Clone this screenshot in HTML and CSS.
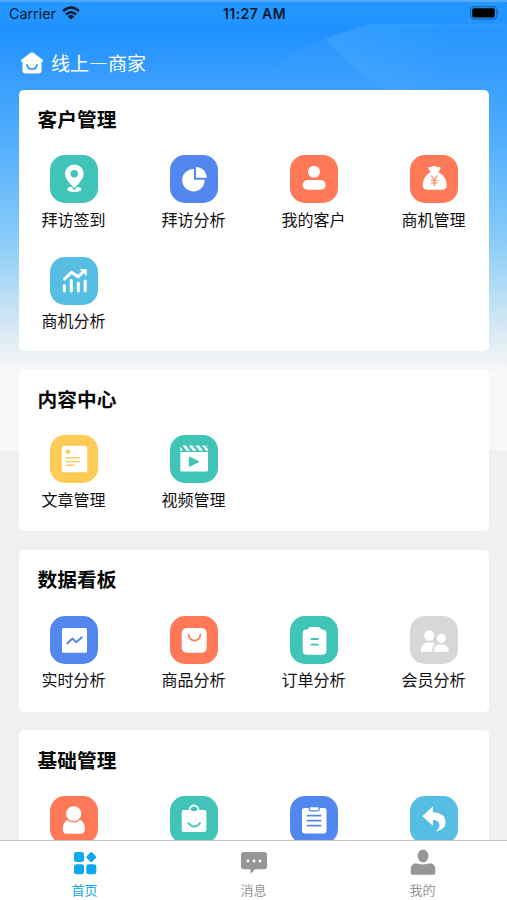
FILE: index.html
```html
<!DOCTYPE html>
<html lang="zh-CN">
<head>
<meta charset="utf-8">
<meta name="viewport" content="width=device-width, initial-scale=1">
<title>线上—商家</title>
<link rel="stylesheet" href="styles.css">
</head>
<body>
<div class="app">
  <svg class="sheen" viewBox="0 0 507 90" aria-hidden="true">
    <defs>
      <linearGradient id="fadeA" x1="0" y1="0" x2="0" y2="1"><stop offset="0" stop-color="#5dbbff" stop-opacity=".16"/><stop offset="1" stop-color="#5dbbff" stop-opacity="0"/></linearGradient>
      <linearGradient id="fadeB" x1="0" y1="0" x2="1" y2="0"><stop offset="0" stop-color="#5dbbff" stop-opacity=".26"/><stop offset="1" stop-color="#5dbbff" stop-opacity="0"/></linearGradient>
    </defs>
    <path fill="url(#fadeA)" d="M252 90Q295 40 372 24H507V90Z"/>
    <path fill="url(#fadeB)" d="M326 39L372 24H450V90H388Q350 68 326 39Z"/>
  </svg>

  <header class="status">
    <div class="status-left">
      <span class="carrier">Carrier</span>
      <svg class="wifi" viewBox="0 0 18 14"><g fill="none" stroke="#071a30" stroke-width="2.5"><path d="M1 5.1Q9-2.1 17 5.1"/><path d="M4 8.5Q9 4 14 8.5"/></g><path fill="#071a30" d="M9 13.6L5.8 10.4Q9 7.8 12.2 10.4Z"/></svg>
    </div>
    <span class="clock">11:27 AM</span>
    <div class="status-right">
      <svg class="battery" viewBox="0 0 30 14"><rect x=".7" y=".7" width="26" height="12.4" rx="3.6" fill="none" stroke="#1768b2" stroke-width="1.2"/><rect x="2.2" y="2.3" width="22.6" height="9.2" rx="1.8" fill="#000"/><path d="M28 5Q30 7 28 9Z" fill="#1768b2"/></svg>
    </div>
  </header>

  <div class="shop">
    <svg class="shop-icon" viewBox="0 0 24 22"><path fill="#fff" d="M10.500.8Q12 0 13.500.8L22.600 7.800Q23.800 9.200 22.300 10H21.500V18Q21.500 21.500 18 21.500H6Q2.500 21.500 2.500 18V10H1.700Q.2 9.200 1.400 7.800Z"/><path fill="none" stroke="#3199fb" stroke-width="1.800" stroke-linecap="round" d="M7 13Q8 17.200 12 17.200T17 13"/></svg>
    <span>线上—商家</span>
  </div>

  <main class="cards">
    <section class="card card-customers">
      <h2>客户管理</h2>
      <div class="grid">
        <div class="item"><svg class="tile teal" viewBox="0 0 48 48"><ellipse cx="24.300" cy="34.200" rx="7.200" ry="2.800" fill="#fff"/><path fill="#fff" stroke="#40c4b8" stroke-width="1.200" d="M24.300 34.300Q14.300 24.500 14.300 18.800A10 10 0 0 1 34.300 18.800Q34.300 24.500 24.300 34.300Z"/><circle cx="24.300" cy="18.700" r="3.700" fill="#40c4b8"/></svg><span>拜访签到</span></div>
        <div class="item"><svg class="tile blue" viewBox="0 0 48 48"><path fill="#fff" d="M24 14V24.700H34.600A11.200 11.200 0 1 1 24 14Z"/><path fill="#fff" d="M26 12A10.700 10.700 0 0 1 36.700 22.800H26Z"/></svg><span>拜访分析</span></div>
        <div class="item"><svg class="tile coral" viewBox="0 0 48 48"><g fill="#fff"><circle cx="24" cy="16.700" r="6"/><rect x="12.700" y="25" width="23" height="9.800" rx="4.900"/></g></svg><span>我的客户</span></div>
        <div class="item"><svg class="tile coral" viewBox="0 0 48 48"><path fill="#fff" d="M18 13Q18.500 11.500 20.500 12.200Q24 10 27.500 12.200Q30 11.300 30.800 13L28.500 17Q36.700 22 36.700 30Q36.700 34.700 32 34.700H17.500Q12.700 34.700 12.700 30Q12.700 22 20.500 17Z"/><path fill="none" stroke="#ff7959" stroke-width="1.100" d="M21 20.500L24.300 24.500L27.600 20.500M24.300 24.500V31M21 25.300H27.600M21 28H27.600"/></svg><span>商机管理</span></div>
        <div class="item"><svg class="tile sky" viewBox="0 0 48 48"><g fill="none" stroke="#fff" stroke-width="3" stroke-linecap="round"><path d="M14.300 28.500V34M21.300 23.500V34M28.300 26V34M35.200 24V34"/><path stroke-linejoin="round" d="M14.500 22L21.500 15.300L28.300 19.800L33 15"/></g><path fill="#fff" d="M29.500 12H36.700V19.200Z"/></svg><span>商机分析</span></div>
      </div>
    </section>

    <section class="card card-content">
      <h2>内容中心</h2>
      <div class="grid">
        <div class="item"><svg class="tile amber" viewBox="0 0 48 48"><rect x="11.700" y="10.700" width="25.500" height="26.600" rx="2.500" fill="#fff"/><g fill="none" stroke="#ffcb57" stroke-width="1.600" stroke-linecap="round"><path d="M16.500 22.700H29.300M16.500 26.500H29.300M16.500 30.300H24"/></g><circle cx="18" cy="16.700" r="2.300" fill="#ffcb57"/></svg><span>文章管理</span></div>
        <div class="item"><svg class="tile teal" viewBox="0 0 48 48"><path fill="#fff" d="M10.300 17H38V35.300Q38 36.400 36.900 36.400H11.400Q10.300 36.400 10.300 35.300ZM10.300 11.500V15.700H12.800ZM12.500 10.500H16L20 15.700H16.500ZM19 10.500H22.500L26.500 15.700H23ZM25.500 10.500H29L33 15.700H29.500ZM32 10.500H35L38 14.500V15.700H36ZM37 10.500H38V12Z"/><path fill="#40c4b8" stroke="#40c4b8" stroke-linejoin="round" d="M19.300 22L28.800 26.700L19.300 31.400Z"/></svg><span>视频管理</span></div>
      </div>
    </section>

    <section class="card card-data">
      <h2>数据看板</h2>
      <div class="grid">
        <div class="item"><svg class="tile blue" viewBox="0 0 48 48"><rect x="12" y="12" width="25" height="24.800" rx="1.500" fill="#fff"/><path fill="none" stroke="#5287ef" stroke-width="1.900" d="M16.800 28L22.300 22.500L26.300 26.300L32.300 20.700"/></svg><span>实时分析</span></div>
        <div class="item"><svg class="tile coral" viewBox="0 0 48 48"><rect x="11.700" y="12" width="25" height="24.800" rx="5" fill="#fff"/><path fill="none" stroke="#ff7959" stroke-width="1.700" stroke-linecap="round" d="M18.700 18.700A5.800 5.800 0 0 0 30.300 18.700"/></svg><span>商品分析</span></div>
        <div class="item"><svg class="tile teal" viewBox="0 0 48 48"><path fill="#fff" d="M16.500 13.500H17.500Q18.500 11 20.500 11H28.500Q30.500 11 31.500 13.500H32.500Q36.400 13.500 36.400 17.500V34.700Q36.400 38.700 32.400 38.700H16.700Q12.700 38.700 12.700 34.700V17.500Q12.700 13.500 16.500 13.500Z"/><path fill="none" stroke="#40c4b8" stroke-width="1.800" stroke-linecap="round" d="M21.500 23H28M21.500 28.700H28"/></svg><span>订单分析</span></div>
        <div class="item"><svg class="tile gray" viewBox="0 0 48 48"><g fill="#fff"><circle cx="19.300" cy="19.500" r="5.200"/><circle cx="31.300" cy="22.300" r="4.500"/><path d="M10.700 35.700Q10.700 26.300 19.500 26.300Q23 26.300 25 28Q22.300 30.500 22 35.700Z"/><path d="M23.500 35.700Q24 28.200 31.300 28.200T39 35.700Z"/></g></svg><span>会员分析</span></div>
      </div>
    </section>

    <section class="card card-base">
      <h2>基础管理</h2>
      <div class="grid">
        <div class="item"><svg class="tile coral" viewBox="0 0 48 48"><path fill="#fff" d="M17.500 23.500H30Q35 27 35 33Q35 37.700 30.500 37.700H17Q12.700 37.700 12.700 33Q12.700 27 17.500 23.500Z"/><circle cx="23.700" cy="17.700" r="8.200" fill="#fff" stroke="#ff7959" stroke-width="1.300"/></svg></div>
        <div class="item"><svg class="tile teal" viewBox="0 0 48 48"><rect x="11.700" y="14" width="24.700" height="22" rx="2" fill="#fff"/><path fill="none" stroke="#fff" stroke-width="1.800" d="M19.500 16V14A4.500 4.500 0 0 1 28.500 14V16"/><path fill="none" stroke="#40c4b8" stroke-width="1.800" stroke-linecap="round" d="M18.300 27.200Q24.200 34 30 27.200"/><path fill="#40c4b8" d="M21 15Q24 10 27 15Z"/></svg></div>
        <div class="item"><svg class="tile blue" viewBox="0 0 48 48"><rect x="12" y="12" width="24.500" height="25.400" rx="2.300" fill="#fff"/><rect x="19.300" y="10.500" width="10" height="4.300" rx="1.500" fill="#fff" stroke="#5287ef" stroke-width="1.300"/><path fill="none" stroke="#5287ef" stroke-width="1.700" stroke-linecap="round" d="M17.500 19.700H30.700M17.500 24.700H30.700M17.500 29.700H30.700"/></svg></div>
        <div class="item"><svg class="tile sky" viewBox="0 0 48 48"><path fill="#fff" d="M12.300 20.300L22.900 10.300V16.300Q35.500 16.800 35.500 26.300Q35.500 34 25.300 35.800Q30.500 31.500 29.300 27.500Q28 24 22.900 24V29.700Z"/></svg></div>
      </div>
    </section>
  </main>

  <nav class="tabs">
    <div class="tab active"><svg viewBox="0 0 26 28"><g fill="currentColor"><rect x="2" y="3" width="10" height="10" rx="2.300"/><rect x="2" y="15.300" width="10" height="10" rx="2.300"/><rect x="14.300" y="15.300" width="10" height="10" rx="2.300"/><rect x="15.400" y="4.200" width="7.800" height="7.800" rx="1.300" transform="rotate(45 19.300 8.100)"/></g></svg><span>首页</span></div>
    <div class="tab"><svg viewBox="0 0 26 28"><path fill="currentColor" d="M3 3H23.300Q26 3 26 5.700V17.500Q26 20.300 23.300 20.300H14L9.800 24.800L9.300 20.300H3Q0 20.300 0 17.500V5.700Q0 3 3 3Z"/><g fill="#fff"><circle cx="7" cy="12" r="1.400"/><circle cx="13" cy="12" r="1.400"/><circle cx="19" cy="12" r="1.400"/></g></svg><span>消息</span></div>
    <div class="tab"><svg viewBox="0 0 26 28"><g fill="currentColor"><ellipse cx="13" cy="7" rx="5.400" ry="6.500"/><path d="M5.500 14.300Q13 16.500 20.500 14.300Q25.300 15.500 25.300 20V24Q25.300 25.800 23.500 25.800H2.500Q.7 25.800.7 24V20Q.7 15.500 5.500 14.300Z"/></g></svg><span>我的</span></div>
  </nav>
</div>
</body>
</html>
```

FILE: styles.css
```css
* { box-sizing: border-box; }

body {
  margin: 0;
  font-family: "Noto Sans CJK SC", sans-serif;
  color: #111;
}

.app {
  position: relative;
  display: flex;
  flex-direction: column;
  height: 900px;
  overflow: hidden;
  background:
    linear-gradient(#2496ff 0, #2294ff 22px, #1f90ff 28px, #3a9efd 80px, #48a9fd 118px, #62b7fb 168px, #86caf8 233px, #b4ddf5 288px, #dcebf3 333px, #f0f3f5 358px, #f8f8f8 372px, #f8f8f8 448px, #f0f0f0 449px);
  border-top: 2px solid #55aaf8;
}

.sheen {
  position: absolute;
  top: -2px;
  left: 0;
  width: 507px;
  height: 90px;
}

.status {
  position: relative;
  display: grid;
  grid-template-columns: 1fr auto 1fr;
  align-items: center;
  height: 22px;
  padding: 0 7px 0 9px;
  font-family: Inter, sans-serif;
  font-size: 14px;
  color: #071a30;
}

.status-left { display: flex; align-items: center; gap: 6px; }
.carrier { font-size: 14.300px; }
.wifi { width: 18px; height: 14px; }
.clock { font-weight: 600; letter-spacing: .400px; }
.status-right { display: flex; justify-content: flex-end; }
.battery { width: 30px; height: 14px; }

.shop {
  position: relative;
  display: flex;
  align-items: center;
  gap: 7px;
  height: 66px;
  padding: 11px 0 0 20px;
  font-size: 19px;
  line-height: 28px;
  color: #fff;
}

.shop-icon { width: 24px; height: 22px; }

.cards {
  position: relative;
  display: flex;
  flex: 1;
  flex-direction: column;
  gap: 18.300px;
  min-height: 0;
  padding: 0 18.500px 0 19.400px;
  overflow: hidden;
}

.card {
  flex: none;
  padding: 14.800px 0 0 18.200px;
  border-radius: 5px;
  background: #fff;
}

.card-customers { height: 261px; padding-top: 14px; }
.card-content,
.card-data { height: 162px; }
.card-base { height: 180px; }

h2 {
  margin: 0 0 21.400px;
  font-size: 19.700px;
  font-weight: 700;
  line-height: 30px;
  color: #080808;
}

.grid {
  display: grid;
  grid-template-columns: repeat(4, 72px);
  grid-auto-rows: 77px;
  gap: 24.500px 48px;
}

.item {
  display: flex;
  flex-direction: column;
  align-items: center;
  font-size: 16px;
  line-height: 24px;
  white-space: nowrap;
}

.item span { margin-top: 3.500px; }

.tile { flex: none; width: 48px; height: 48px; border-radius: 15px; }
.teal { background: #40c4b8; }
.blue { background: #5287ef; }
.coral { background: #ff7959; }
.sky { background: #56bde3; }
.amber { background: #ffcb57; }
.gray { background: #d7d7d7; }

.tabs {
  position: relative;
  display: grid;
  flex: none;
  grid-template-columns: repeat(3, 1fr);
  height: 60px;
  border-top: 1px solid #c5c5c5;
  background: #fff;
}

.tab {
  display: flex;
  flex-direction: column;
  align-items: center;
  padding-top: 8px;
  font-size: 13px;
  line-height: 20px;
  color: #969696;
}

.tab svg { width: 26px; height: 28px; margin-bottom: 3px; }
.active { color: #0fa8ee; }
```
